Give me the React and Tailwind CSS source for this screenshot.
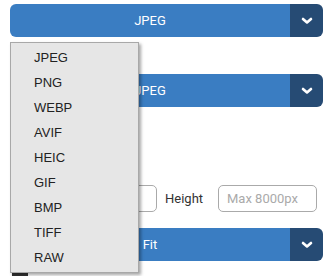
import React from "react";

const formats = ["JPEG", "PNG", "WEBP", "AVIF", "HEIC", "GIF", "BMP", "TIFF", "RAW"];

const Chevron = () => (
  <svg width="12" height="8" viewBox="0 0 12 8" fill="none">
    <path d="M2 2l4 3.5L10 2" stroke="white" strokeWidth="2.6" strokeLinecap="round" strokeLinejoin="round" />
  </svg>
);

const SelectBar = ({ label }) => (
  <div className="flex h-[33px] rounded-[6px] overflow-hidden">
    <div className="flex-1 bg-[#3a7dc2] text-white text-[13px] flex items-center justify-center">
      {label}
    </div>
    <div className="w-[33px] bg-[#264b74] flex items-center justify-center">
      <Chevron />
    </div>
  </div>
);

export default function App() {
  return (
    <div className="relative w-[331px] h-[276px] bg-white overflow-hidden font-['Roboto',sans-serif]">
      <div className="flex flex-col pl-[10px] pr-[8px] pt-[4px]">
        <SelectBar label="JPEG" />
        <div className="h-[37px]" />
        <SelectBar label="JPEG" />
        <div className="h-[78px]" />
        <div className="flex items-center h-[27px] text-[13px] text-[#333]">
          <div className="w-[80px]" />
          <div className="w-[67px] h-[27px] border border-[#aaa] rounded-[5px]" />
          <span className="ml-[8px] w-[53px]">Height</span>
          <div className="w-[99px] h-[27px] border border-[#aaa] rounded-[5px] flex items-center pl-[8px] text-[#aaa]">
            Max 8000px
          </div>
        </div>
        <div className="h-[16px]" />
        <SelectBar label="Fit" />
        <div className="mt-[11px] ml-[2px] w-[16px] h-[4px] bg-[#333]" />
      </div>

      <div className="absolute left-[10px] top-[42px] w-[129px] bg-[#e6e6e6] border border-[#a8a8a8] shadow-[2px_2px_3px_rgba(0,0,0,0.35)] py-[2px] font-['Liberation_Sans',sans-serif] text-[13px] text-[#222]">
        {formats.map((f) => (
          <div key={f} className="h-[25px] flex items-center pl-[23px]">
            {f}
          </div>
        ))}
      </div>
    </div>
  );
}
